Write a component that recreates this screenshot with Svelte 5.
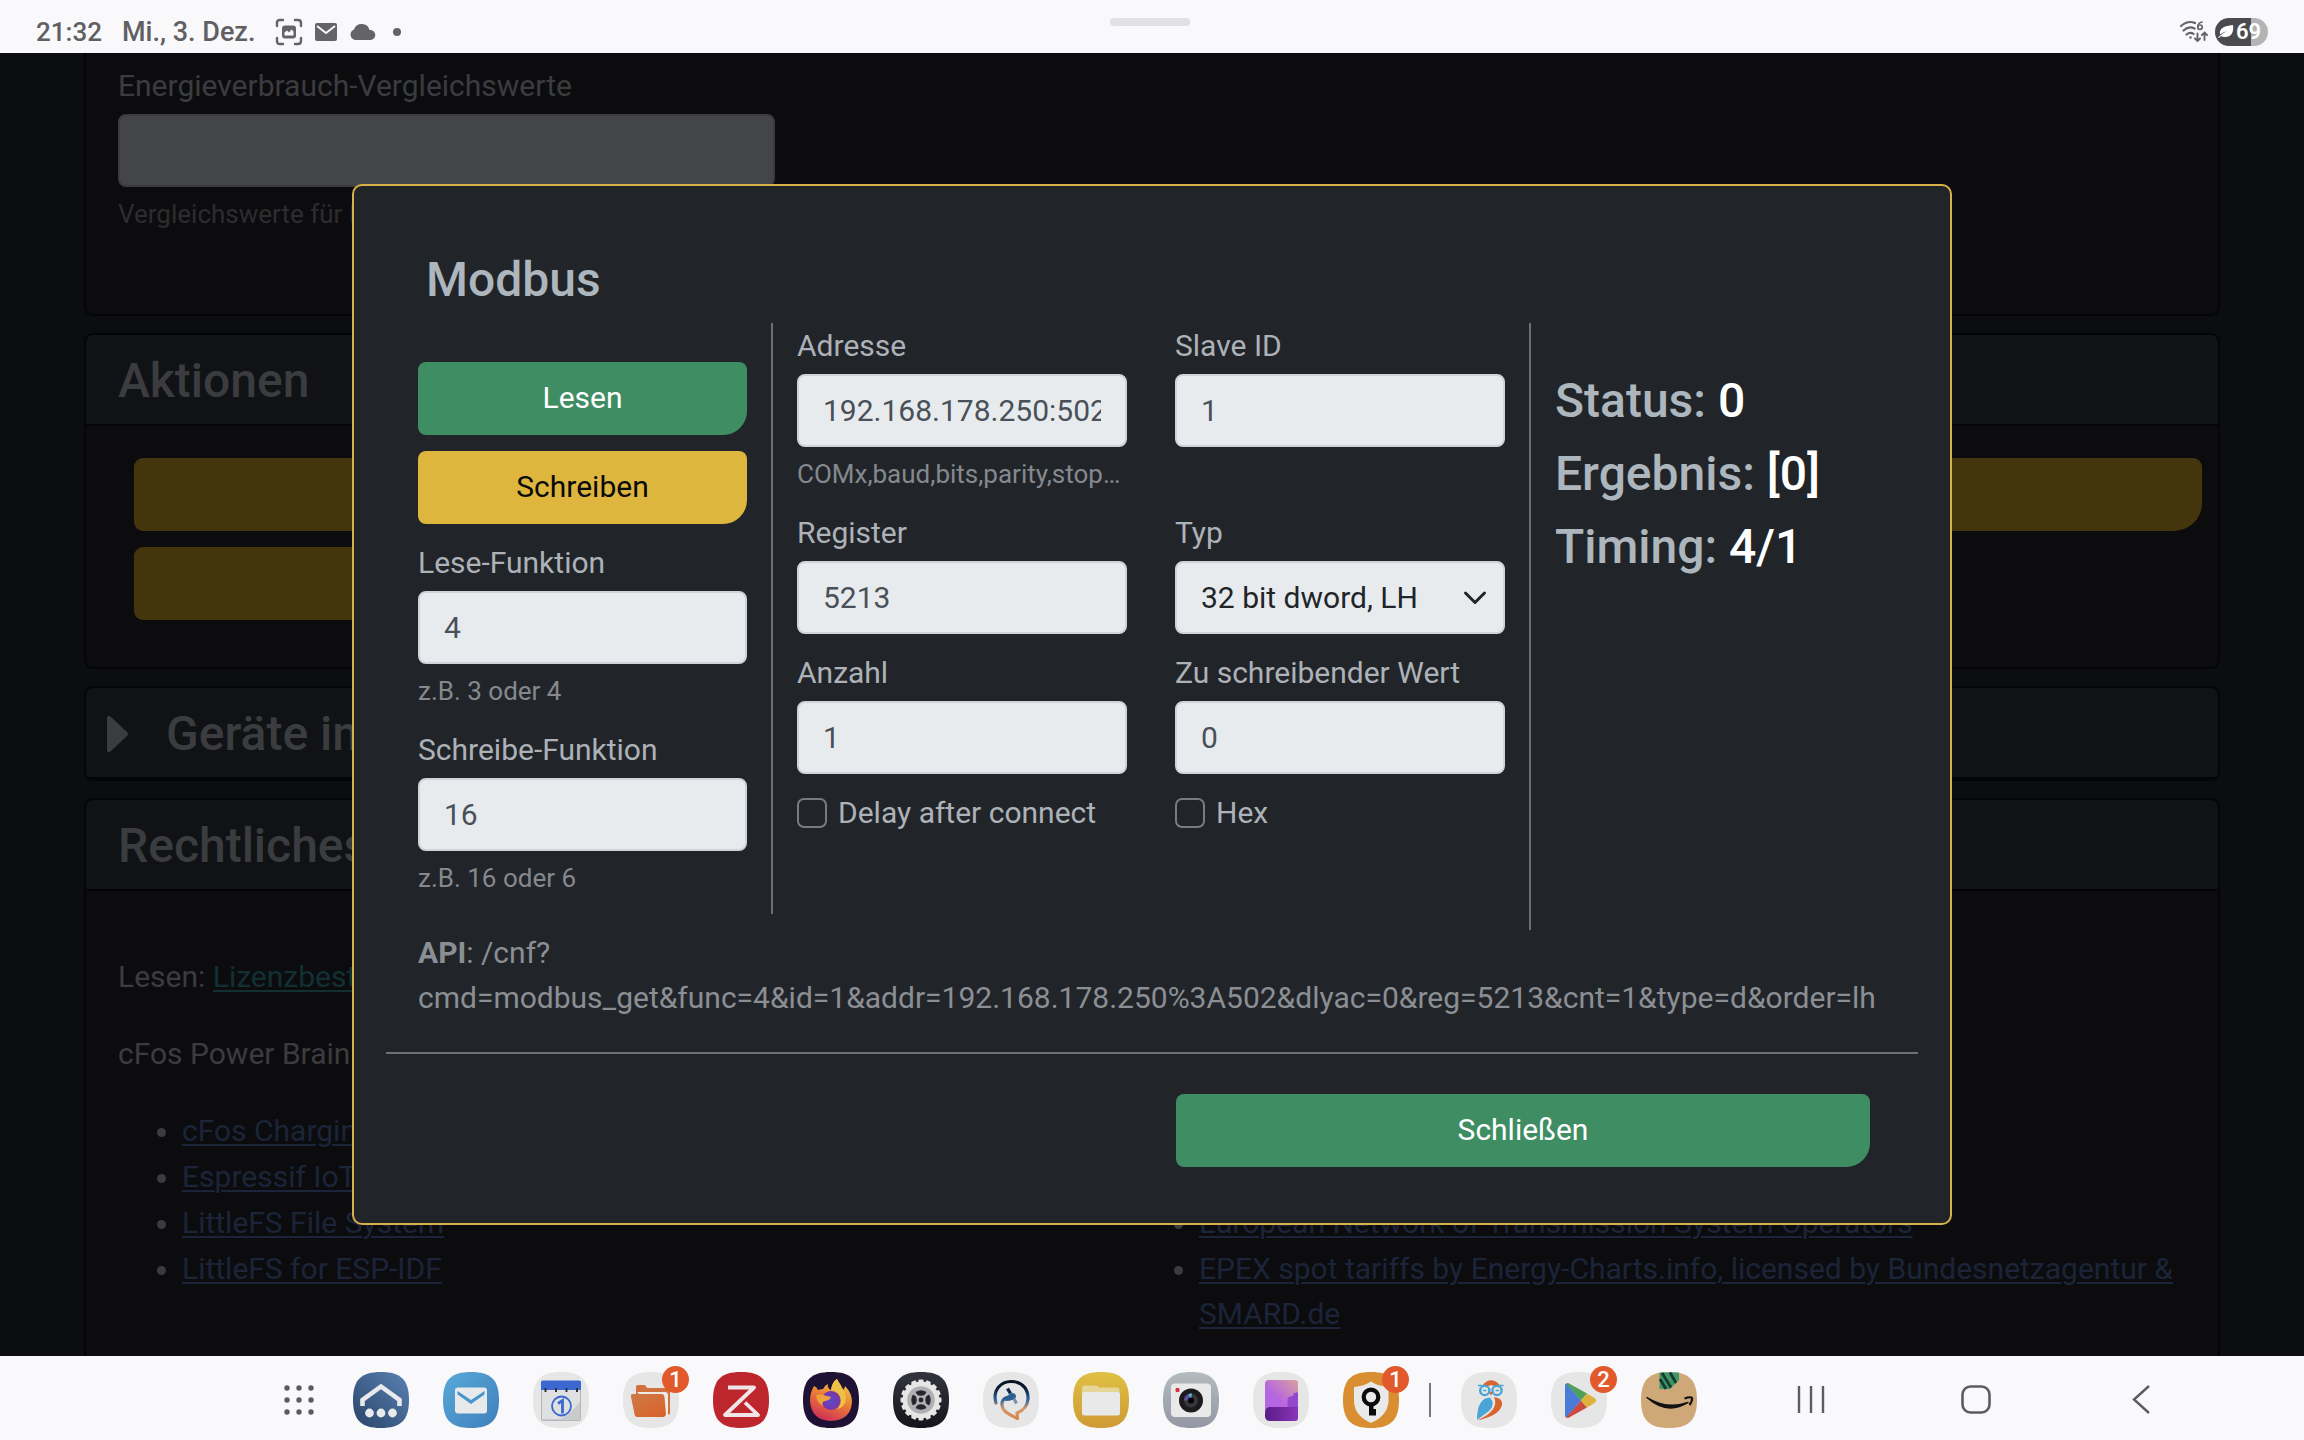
<script>
  let readFn = $state('4');
  let writeFn = $state('16');
  let address = $state('192.168.178.250:502');
  let slaveId = $state('1');
  let register = $state('5213');
  let type = $state('dlh');
  let count = $state('1');
  let value = $state('0');
  let delay = $state(false);
  let hex = $state(false);

  const apiPath = '/cnf?';
  const apiQuery =
    'cmd=modbus_get&func=4&id=1&addr=192.168.178.250%3A502&dlyac=0&reg=5213&cnt=1&type=d&order=lh';
  const squircle = 'M28 0C48 0 56 8 56 28S48 56 28 56 0 48 0 28 8 0 28 0Z';
  const dots = [0, 1, 2].flatMap((r) => [0, 1, 2].map((c) => [c * 12 + 3, r * 12 + 3]));
  const teeth = Array.from({ length: 16 }, (_, i) => i * 22.5);
  const leftLinks = ['cFos Charging Manager', 'Espressif IoT Framework', 'LittleFS File System', 'LittleFS for ESP-IDF'];
  const rightLinks = [
    'European Network of Transmission System Operators',
    'EPEX spot tariffs by Energy-Charts.info, licensed by Bundesnetzagentur & SMARD.de',
  ];
</script>

<div class="screen">
  <header class="status">
    <span class="clock">21:32</span>
    <span class="date">Mi., 3. Dez.</span>
    <div class="notes">
      <svg width="28" height="28" viewBox="0 0 28 28" fill="none" stroke="#646466" stroke-width="2.4">
        <path d="M2 8V5Q2 2 5 2H8M20 2H23Q26 2 26 5V8M26 20V23Q26 26 23 26H20M8 26H5Q2 26 2 23V20" stroke-linecap="round" />
        <rect x="7" y="7.500" width="14" height="13" rx="3" fill="#646466" stroke="none" />
        <path d="M9.500 17.500V14.500L12 12.500 14 14.500 16.500 11.500 18.500 13.500V17.500Z" fill="#f9f9fc" stroke="none" />
      </svg>
      <svg width="24" height="20" viewBox="0 0 24 20">
        <rect x="1" y="1" width="22" height="18" rx="2" fill="#646466" />
        <path d="M3 4L12 11 21 4" fill="none" stroke="#f9f9fc" stroke-width="2" />
      </svg>
      <svg width="28" height="18" viewBox="0 0 28 18">
        <path d="M6 17A5.500 5.500 0 0 1 5 6.500 8 8 0 0 1 13 1 8 8 0 0 1 20.500 7 5 5 0 0 1 22 17Z" fill="#646466" />
      </svg>
      <svg width="8" height="8" viewBox="0 0 8 8"><circle cx="4" cy="4" r="4" fill="#646466" /></svg>
    </div>
    <div class="handle"></div>
    <div class="signals">
      <svg width="28" height="24" viewBox="0 0 28 24" fill="none" stroke="#646466" stroke-width="2.200" stroke-linecap="round">
        <path d="M1 6Q8 0 15 3M3.500 10.500Q9 5.500 14.500 8.500M6.500 14.500Q10 11.500 13.500 13.800" />
        <circle cx="10.500" cy="17.500" r="1.200" fill="#646466" stroke="none" />
        <path d="M22 2Q18 3 17.800 6.500" stroke-width="1.700" />
        <circle cx="20" cy="7.200" r="2.200" stroke-width="1.700" />
        <path d="M17.500 13.500V20.500M15 18.500L17.500 21 20 18.500M24.500 20V12.500M22 15L24.500 12.500 27 15" stroke-width="1.900" />
      </svg>
      <div class="battery">
        <svg width="16" height="14" viewBox="0 0 16 14">
          <path d="M15 0C16 8 13 12 7 12Q4 12 3 11L1 13 0 12.500Q3 9 9 6 4 7.500 2 9.500C1 3 6 1 15 0Z" fill="#fff" />
        </svg>
        <span>69</span>
      </div>
    </div>
  </header>

  <main>
    <div class="page">
      <section class="card cut">
        <label for="compare">Energieverbrauch-Vergleichswerte</label>
        <input id="compare" class="dim" type="text" />
        <small>Vergleichswerte für Energie</small>
      </section>

      <section class="card">
        <h3>Aktionen</h3>
        <div class="actions">
          <button type="button" aria-label="Neu starten"></button>
          <button type="button" aria-label="Aktualisieren"></button>
          <button type="button" aria-label="Modbus"></button>
        </div>
      </section>

      <section class="card closed">
        <h3>
          <svg width="22" height="38" viewBox="0 0 22 38"><path d="M0 3Q0-1 4 2L20 17Q22 19 20 21L4 36Q0 39 0 35Z" fill="#3b3c3f" /></svg>
          Geräte im Netzwerk
        </h3>
      </section>

      <section class="card last">
        <h3>Rechtliches</h3>
        <div class="legal">
          <p>Lesen: <a class="teal" href="#license">Lizenzbestimmungen</a></p>
          <p>cFos Power Brain</p>
          <div class="lists">
            <ul>
              {#each leftLinks as link}<li><a href="#legal">{link}</a></li>{/each}
            </ul>
            <ul class="short">
              {#each rightLinks as link}<li><a href="#legal">{link}</a></li>{/each}
            </ul>
          </div>
        </div>
      </section>
    </div>

    <div class="overlay">
      <div class="modal" role="dialog" aria-modal="true" aria-labelledby="title">
        <h2 id="title">Modbus</h2>
        <div class="cols">
          <div class="col side">
            <button type="button" class="btn green">Lesen</button>
            <button type="button" class="btn yellow">Schreiben</button>
            <div class="field">
              <label for="readfn">Lese-Funktion</label>
              <input id="readfn" type="text" bind:value={readFn} />
              <small>z.B. 3 oder 4</small>
            </div>
            <div class="field">
              <label for="writefn">Schreibe-Funktion</label>
              <input id="writefn" type="text" bind:value={writeFn} />
              <small>z.B. 16 oder 6</small>
            </div>
          </div>

          <div class="col params">
            <div class="field">
              <label for="addr">Adresse</label>
              <input id="addr" type="text" bind:value={address} />
              <small>COMx,baud,bits,parity,stopbits</small>
            </div>
            <div class="field">
              <label for="slave">Slave ID</label>
              <input id="slave" type="text" bind:value={slaveId} />
            </div>
            <div class="field">
              <label for="reg">Register</label>
              <input id="reg" type="text" bind:value={register} />
            </div>
            <div class="field">
              <label for="type">Typ</label>
              <div class="select">
                <select id="type" bind:value={type}>
                  <option value="dlh">32 bit dword, LH</option>
                  <option value="dhl">32 bit dword, HL</option>
                </select>
                <svg width="24" height="16" viewBox="0 0 24 16" fill="none" stroke="#212529" stroke-width="3" stroke-linecap="round" stroke-linejoin="round"><path d="M2.500 3L12 12.500 21.500 3" /></svg>
              </div>
            </div>
            <div class="field">
              <label for="count">Anzahl</label>
              <input id="count" type="text" bind:value={count} />
            </div>
            <div class="field">
              <label for="value">Zu schreibender Wert</label>
              <input id="value" type="text" bind:value={value} />
            </div>
            <label class="check"><input type="checkbox" bind:checked={delay} />Delay after connect</label>
            <label class="check"><input type="checkbox" bind:checked={hex} />Hex</label>
          </div>

          <div class="col result">
            <p>Status: <b>0</b></p>
            <p>Ergebnis: <b>[0]</b></p>
            <p>Timing: <b>4/1</b></p>
          </div>
        </div>

        <p class="api"><strong>API</strong>: {apiPath}<br />{apiQuery}</p>
        <hr />
        <div class="foot">
          <button type="button" class="btn green">Schließen</button>
        </div>
      </div>
    </div>
  </main>

  <nav class="taskbar" aria-label="Apps">
    <button type="button" class="grid" aria-label="Alle Apps">
      <svg width="30" height="30" viewBox="0 0 30 30" fill="#5c5c5f">
        {#each dots as [x, y]}<circle cx={x} cy={y} r="2.700" />{/each}
      </svg>
    </button>
    <div class="apps">
      <button type="button" aria-label="Start">
        <svg viewBox="0 0 56 56">
          <defs><linearGradient id="gHome" x1="1" y1="0" x2="0" y2="1"><stop offset="0" stop-color="#5a82b4" /><stop offset="1" stop-color="#294468" /></linearGradient></defs>
          <path d={squircle} fill="url(#gHome)" />
          <path d="M9.500 34V28L28 14.500 46.500 28V34" fill="none" stroke="#e9eaec" stroke-width="4.600" />
          <g fill="#e9eaec"><circle cx="16.500" cy="41" r="4.400" /><circle cx="28" cy="41" r="4.400" /><circle cx="39.500" cy="41" r="4.400" /></g>
        </svg>
      </button>
      <button type="button" aria-label="E-Mail">
        <svg viewBox="0 0 56 56">
          <defs><linearGradient id="gMail" x1="0" y1="0" x2="1" y2="1"><stop offset="0" stop-color="#58a9d8" /><stop offset="1" stop-color="#3f7fbd" /></linearGradient></defs>
          <path d={squircle} fill="url(#gMail)" />
          <rect x="12" y="15.500" width="32" height="26" rx="3" fill="#e8e9eb" />
          <path d="M14.500 19L28 28 41.500 19V22.500L28 32 14.500 22.500Z" fill="#4796cc" />
        </svg>
      </button>
      <button type="button" aria-label="Kalender">
        <svg viewBox="0 0 56 56">
          <path d={squircle} fill="#e6e6e6" />
          <rect x="8" y="9" width="40" height="40" rx="2" fill="#b5b6b9" />
          <rect x="9" y="9" width="38" height="38.500" rx="1.500" fill="#dfe0e2" />
          <path d="M8 18V10Q8 8.500 10 8.500H46Q48 8.500 48 10V18Z" fill="#3a68d0" />
          <path d="M27 47.500L37 41 47 30V47.500Z" fill="#c9cacc" />
          <g stroke="#333" stroke-width="2"><path d="M12.500 16V20M23 16V20M33.500 16V20M44 16V20" /></g>
          <circle cx="28.500" cy="34" r="9.500" fill="none" stroke="#3a68d0" stroke-width="1.800" />
          <path d="M25 31.500L29.500 28.500V41.500" fill="none" stroke="#3a68d0" stroke-width="2.800" />
        </svg>
      </button>
      <button type="button" aria-label="Dateien">
        <svg viewBox="0 0 56 56">
          <defs><linearGradient id="gFold" x1="0" y1="0" x2="1" y2="1"><stop offset="0" stop-color="#cf7a48" /><stop offset="1" stop-color="#d96128" /></linearGradient></defs>
          <path d={squircle} fill="#e6e6e6" />
          <path d="M13 22V15Q13 13 15 13H21Q23 13 24 16H44Q47 16 47 19V42L40 44Z" fill="#d0713e" />
          <path d="M14 20H42Q45 20 45 23V44H38Z" fill="#eeeae7" />
          <path d="M10 22H38Q41 22 41.500 25L43 43 41 45H14Q12 45 11.500 42L8 25Q7.500 22 10 22Z" fill="url(#gFold)" />
        </svg>
        <span class="badge">1</span>
      </button>
      <button type="button" aria-label="Z">
        <svg viewBox="0 0 56 56">
          <path d={squircle} fill="#bd262d" />
          <path d="M15 15.500H41L12 43H45L32 30.500" fill="none" stroke="#f0e6e7" stroke-width="3.800" stroke-linejoin="round" />
        </svg>
      </button>
      <button type="button" aria-label="Firefox">
        <svg viewBox="0 0 56 56">
          <defs>
            <linearGradient id="gFox" x1="0.800" y1="0" x2="0.350" y2="1"><stop offset="0" stop-color="#f0d24a" /><stop offset="0.500" stop-color="#ea7d35" /><stop offset="1" stop-color="#cf2f58" /></linearGradient>
            <radialGradient id="gGlobe"><stop offset="0" stop-color="#5b49c8" /><stop offset="1" stop-color="#7a36a8" /></radialGradient>
          </defs>
          <path d={squircle} fill="#1d1233" />
          <path d="M11 14Q14 15 15 18Q18 17 20 17Q22 13 25 12Q24 16 28 18Q29 10 34 7Q35 14 40 18Q42 16 42 14Q49 21 49 30Q48 48 28 49Q8 48 7 29Q7 20 11 14Z" fill="url(#gFox)" />
          <circle cx="28" cy="28.500" r="9.500" fill="url(#gGlobe)" />
          <path d="M13 23Q18 22 22 23.500L28 25Q27 28.500 22 29Q18 30 20 34Q14 31 13 23Z" fill="#f0a13c" />
          <path d="M28 18Q37 19 38 28Q38 34 34 37Q43 35 43 26Q42 19 34 7Q29 10 28 18Z" fill="#eec245" />
        </svg>
      </button>
      <button type="button" aria-label="Einstellungen">
        <svg viewBox="0 0 56 56">
          <defs><linearGradient id="gSet" x1="0" y1="0" x2="0" y2="1"><stop offset="0" stop-color="#34343f" /><stop offset="1" stop-color="#14141a" /></linearGradient></defs>
          <path d={squircle} fill="url(#gSet)" />
          {#each teeth as a}<rect x="25.500" y="7.500" width="5" height="8" rx="1" fill="#e6e6e6" transform="rotate({a} 28 28)" />{/each}
          <circle cx="28" cy="28" r="18.500" fill="#e6e6e6" />
          <circle cx="28" cy="28" r="13.800" fill="#b0b0b4" />
          <g fill="#25252c">
            <path id="slot" d="M22.500 20Q28 16.500 33.500 20L31.500 23Q28 24.500 24.500 23Z" />
            <path d="M22.500 20Q28 16.500 33.500 20L31.500 23Q28 24.500 24.500 23Z" transform="rotate(90 28 28)" />
            <path d="M22.500 20Q28 16.500 33.500 20L31.500 23Q28 24.500 24.500 23Z" transform="rotate(180 28 28)" />
            <path d="M22.500 20Q28 16.500 33.500 20L31.500 23Q28 24.500 24.500 23Z" transform="rotate(270 28 28)" />
            <circle cx="28" cy="28" r="2.400" />
          </g>
        </svg>
      </button>
      <button type="button" aria-label="Assistent">
        <svg viewBox="0 0 56 56">
          <defs><linearGradient id="gHorse" x1="0" y1="8" x2="0" y2="49" gradientUnits="userSpaceOnUse"><stop offset="0" stop-color="#08111f" /><stop offset="0.200" stop-color="#0c1c30" /><stop offset="0.480" stop-color="#2f649c" /><stop offset="0.700" stop-color="#d39a6c" /><stop offset="1" stop-color="#db7f45" /></linearGradient></defs>
          <path d={squircle} fill="#e6e6e6" />
          <path d="M13 31C9 17 19 9.500 28 9.500C40 9.500 45.500 18 45 27C44.500 35 39 39 34 41L34.500 46.500C29 43.500 24 42 21 38C17.500 33 18.500 27 24 25.500" fill="none" stroke="url(#gHorse)" stroke-width="3.200" stroke-linecap="round" stroke-linejoin="round" />
          <path d="M22 29Q24 22 29 21Q33 21 33 25Q31 29 22 29Z" fill="#2c5f92" />
          <path d="M24.500 16.500L27.500 21.500" stroke="#12294a" stroke-width="3.400" />
          <path d="M31 26.500L33.500 31.500" stroke="#7b8fa6" stroke-width="3" />
        </svg>
      </button>
      <button type="button" aria-label="Eigene Dateien">
        <svg viewBox="0 0 56 56">
          <defs><linearGradient id="gMy" x1="0" y1="0" x2="0" y2="1"><stop offset="0" stop-color="#dfc044" /><stop offset="1" stop-color="#cf9a34" /></linearGradient></defs>
          <path d={squircle} fill="url(#gMy)" />
          <path d="M9 24V16Q9 13.500 11.500 13.500H23Q25 13.500 26 15.500H44Q46.500 15.500 46.500 18V24Z" fill="#e5d596" />
          <rect x="9" y="20" width="38" height="23.500" rx="2.500" fill="#e9e9ea" />
        </svg>
      </button>
      <button type="button" aria-label="Kamera">
        <svg viewBox="0 0 56 56">
          <defs><linearGradient id="gCam" x1="0" y1="0" x2="0" y2="1"><stop offset="0" stop-color="#b3bcc0" /><stop offset="1" stop-color="#9497a4" /></linearGradient></defs>
          <path d={squircle} fill="url(#gCam)" />
          <rect x="8" y="11.500" width="40" height="33.500" rx="4" fill="#e9e9ea" />
          <circle cx="14.500" cy="18" r="2.200" fill="#d0343a" />
          <circle cx="28" cy="28.500" r="12" fill="#1b1b1d" />
          <circle cx="28" cy="28.500" r="7" fill="#37373b" />
          <path d="M28 28.500L21 28.500A7 7 0 0 1 28 21.500Z" fill="#5d4f9c" />
          <path d="M28 28.500L25.500 22A7 7 0 0 1 29 21.500Z" fill="#54b8c6" />
          <circle cx="28" cy="28.500" r="3" fill="#000" />
        </svg>
      </button>
      <button type="button" aria-label="Journal">
        <svg viewBox="0 0 56 56">
          <defs>
            <linearGradient id="gJ" x1="0" y1="1" x2="1" y2="0"><stop offset="0.400" stop-color="#b566e0" /><stop offset="1" stop-color="#dca0a0" /></linearGradient>
            <linearGradient id="gK" x1="0" y1="0" x2="1" y2="0"><stop offset="0" stop-color="#5a1c86" /><stop offset="1" stop-color="#8a35b8" /></linearGradient>
          </defs>
          <path d={squircle} fill="#e6e6e6" />
          <path d="M12 40V12Q12 8 16 8H42Q45 8 45 11V40Z" fill="url(#gJ)" />
          <path d="M34.500 36V28Q34.500 24.500 38 24.500Q41 24 41 20Q41 22 45 20V38Z" fill="#9448cc" />
          <path d="M12 42Q12 34 18 35H45V46Q45 49 42 49H17Q12 49 12 44Z" fill="url(#gK)" />
        </svg>
      </button>
      <button type="button" aria-label="Schlüssel">
        <svg viewBox="0 0 56 56">
          <path d={squircle} fill="#d98e31" />
          <path d="M28 9.500Q35 14 45.500 15V30Q44 44 28 51Q12 44 11 30V15Q21 14 28 9.500Z" fill="#e9e9ea" />
          <circle cx="28" cy="25" r="7.300" fill="none" stroke="#0b0b0b" stroke-width="4.200" />
          <path d="M26 31H30.500V37H33V43.500H26Z" fill="#0b0b0b" />
        </svg>
        <span class="badge">1</span>
      </button>
    </div>
    <span class="sep"></span>
    <div class="apps">
      <button type="button" aria-label="Eule">
        <svg viewBox="0 0 56 56">
          <path d={squircle} fill="#e6e6e6" />
          <path d="M22 12.500Q30 4 38.500 12.500Q34 15 30 13 26 15 22 12.500Z" fill="#d9652e" />
          <g fill="none" stroke="#4aa5d6" stroke-width="2.400"><circle cx="23.800" cy="18.500" r="4.600" /><circle cx="36" cy="18.500" r="4.600" /><path d="M17 13.500H22M38 13.500H42.500" stroke-width="1.600" /><path d="M22 18.500H25.500M34.500 18.500H38" stroke-width="1.600" /></g>
          <path d="M28.500 20H31.500L30 24Z" fill="#d9652e" />
          <path d="M29 25.500Q35 32 28 39L16 48Q16 26 29 25.500Z" fill="#4aa5d6" />
          <path d="M33 25Q42 26 41 33Q38 44 17 48Q39 38 33 25Z" fill="#d9652e" />
        </svg>
      </button>
      <button type="button" aria-label="Play Store">
        <svg viewBox="0 0 56 56">
          <path d={squircle} fill="#e6e6e6" />
          <path d="M14 13V44Q14 46 16 45L30 28.500 16 12Q14 11 14 13Z" fill="#4a7bd6" />
          <path d="M15 11.500Q17 10.500 19 12L36 21.500 30 28.500Z" fill="#4fa05a" />
          <path d="M15 45.500Q17 46.500 19 45L36 35.500 30 28.500Z" fill="#cc4a40" />
          <path d="M36 21.500L43.500 26Q47 28.500 43.500 31L36 35.500 30 28.500Z" fill="#deb23e" />
        </svg>
        <span class="badge">2</span>
      </button>
      <button type="button" aria-label="Amazon">
        <svg viewBox="0 0 56 56">
          <path d={squircle} fill="#cfa878" />
          <path d="M18.500 0.500H38V8L29 17H18.500Z" fill="#3f9668" />
          <path d="M19 7L25 17M21 1L30 15.500M29 0.500L35 11" stroke="#163a30" stroke-width="2.800" />
          <path d="M6 25.500Q26 38 47 30.500Q26 43.500 6 25.500Z" fill="#111" stroke="#111" stroke-width="1.400" stroke-linejoin="round" />
          <path d="M43.500 26.500Q50 24.500 51 26 51.500 29 48.500 33" fill="none" stroke="#111" stroke-width="2.200" />
        </svg>
      </button>
    </div>
    <div class="nav">
      <button type="button" aria-label="Letzte Apps"><svg width="28" height="30" viewBox="0 0 28 30" stroke="#5c5c5f" stroke-width="2.400"><path d="M2 1V28M14 1V28M26 1V28" /></svg></button>
      <button type="button" aria-label="Startseite"><svg width="30" height="30" viewBox="0 0 30 30" fill="none" stroke="#5c5c5f" stroke-width="2.600"><rect x="1.500" y="1.500" width="27" height="26" rx="8" /></svg></button>
      <button type="button" aria-label="Zurück"><svg width="20" height="30" viewBox="0 0 20 30" fill="none" stroke="#5c5c5f" stroke-width="2.400"><path d="M18 1L3 14.500 18 28" /></svg></button>
    </div>
  </nav>
</div>

<style>
  :global(body) { margin: 0; background: #0b0c0e; }
  .screen, .screen :global(*) { box-sizing: border-box; }
  .screen {
    display: flex; flex-direction: column; height: 100vh; overflow: hidden;
    font: 400 30px/45px Roboto, sans-serif; color: #adb2b8;
  }
  button, input, select { font: inherit; margin: 0; }
  h2, h3, p, ul { margin: 0; }
  svg { display: block; flex: none; }

  .status {
    position: relative; display: flex; align-items: center; flex: none; height: 53px;
    padding: 11px 36px 0; background: #f9f9fc; color: #606062;
    font-size: 26px; line-height: 30px; font-weight: 500;
  }
  .date { margin-left: 20px; font-size: 27px; }
  .notes { display: flex; align-items: center; gap: 11px; margin-left: 20px; }
  .notes svg:last-child { margin-left: 5px; }
  .handle {
    position: absolute; left: 50%; top: 18px; width: 80px; height: 8px; margin-left: -42px;
    border-radius: 4px; background: #e1e1e4;
  }
  .signals { display: flex; align-items: center; gap: 7px; margin-left: auto; }
  .battery {
    display: flex; align-items: center; gap: 2px; width: 53px; height: 28px; padding-left: 3px;
    border-radius: 14px; background: linear-gradient(90deg, #4b4b4d 68%, #b4b4b6 68%);
    color: #fff; font-size: 22px; font-weight: 600; line-height: 28px;
  }

  main { position: relative; flex: 1; min-height: 0; overflow: hidden; background: #0b0d0f; }
  .page { display: flex; flex-direction: column; gap: 17px; padding: 0 84px; color: #3b3c3f; }
  .card { border: 2px solid #040506; border-radius: 9px; background: #0c0c0e; overflow: hidden; }
  .cut { display: flex; flex-direction: column; align-items: flex-start; padding: 10px 32px 80px; border-top: 0; border-radius: 0 0 9px 9px; }
  .cut label { margin-bottom: 6px; }
  .cut small { margin-top: 8px; color: #2c2d2f; }
  .dim { width: calc(33.333% - 32px); height: 73px; border: 2px solid #3b3c3e; border-radius: 8px; background: #444547; padding: 0 24px; }
  small { display: block; font-size: 26px; line-height: 39px; }
  .card h3 {
    display: flex; align-items: center; padding: 18px 32px 16px; border-bottom: 2px solid #040506;
    background: #111215; font-size: 48px; line-height: 55px; font-weight: 500; white-space: nowrap;
  }
  .actions { display: grid; grid-template-columns: 1fr 1fr; gap: 16px 48px; padding: 32px 16px 47px 48px; }
  .actions button { height: 73px; border: 0; border-radius: 9px 9px 28px 9px; background: #43360c; }
  .closed h3 { gap: 37px; padding-left: 21px; }
  .legal { padding: 63px 32px; }
  .legal p { margin-bottom: 32px; }
  .lists { display: grid; grid-template-columns: 1fr 1fr; }
  ul { padding-left: 64px; }
  ul.short { padding-top: 92px; padding-left: 47px; }
  li { margin-bottom: 1px; }
  a { color: #1b2438; text-underline-offset: 3px; text-decoration-thickness: 2px; }
  a.teal { color: #123034; }

  .overlay { position: absolute; inset: 0; display: flex; align-items: center; justify-content: center; }
  .modal { width: 1600px; max-width: 94%; padding: 66px 32px 56px; border: 2px solid #d8b14b; border-radius: 10px; background: #212529; }
  h2 { padding-left: 40px; font-size: 48px; line-height: 55px; font-weight: 500; color: #adb5bd; }
  .cols { display: grid; grid-template-columns: 1fr 2fr 1fr; align-items: start; margin: 16px 8px 0; }
  .col { padding: 0 24px; }
  .side, .params { border-right: 2px solid #6b7076; }
  .side { display: flex; flex-direction: column; gap: 16px; padding-top: 39px; padding-bottom: 16px; }
  .params { display: grid; grid-template-columns: 1fr 1fr; gap: 16px 48px; padding-bottom: 95px; }
  .field { min-width: 0; }
  .field label { display: block; margin-bottom: 6px; }
  .field small { margin-top: 8px; overflow: hidden; white-space: nowrap; text-overflow: ellipsis; color: #85898e; }
  .field input, select {
    display: block; width: 100%; height: 73px; padding: 0 24px; border: 2px solid #ced4da; border-radius: 8px;
    background: #e8ebee; color: #495057;
  }
  .select { position: relative; }
  select { appearance: none; color: #212529; }
  .select svg { position: absolute; right: 18px; top: 29px; pointer-events: none; }
  .check { display: flex; align-items: center; gap: 11px; }
  .check input { appearance: none; width: 30px; height: 30px; border: 2px solid #777c82; border-radius: 7px; }
  .check input:checked { background: #3f8e63; }
  .btn { height: 73px; padding: 0 0 2px; border: 0; border-radius: 8px 8px 24px 8px; }
  .green { background: #3f8e63; color: #fff; }
  .yellow { background: #deb63e; color: #0a0a0a; }
  .result { padding-top: 50px; font-size: 48px; font-weight: 500; line-height: 55px; color: #adb5bd; }
  .result p { margin-bottom: 18px; }
  .result b { font-weight: 500; color: #fff; }
  .api { margin: 0 32px; color: #8b8f94; white-space: nowrap; }
  .api strong { font-weight: 700; }
  hr { height: 2px; margin: 32px 0 40px; border: 0; background: #6c7178; }
  .foot { display: flex; justify-content: flex-end; padding: 0 48px 0 0; }
  .foot .btn { width: 694px; max-width: 100%; }

  .taskbar { display: flex; align-items: center; gap: 30px; flex: none; height: 84px; padding: 3px 131px 0 279px; background: #f9f9fc; }
  .taskbar button { position: relative; padding: 0; border: 0; background: none; }
  .grid { display: grid; place-items: center; width: 40px; height: 56px; margin-right: 4px; }
  .apps { display: flex; gap: 34px; }
  .apps button { width: 56px; height: 56px; }
  .badge {
    position: absolute; right: -10px; top: -6px; width: 27px; height: 27px; border-radius: 50%;
    background: #e2592b; color: #fff; font-size: 22px; line-height: 27px; font-weight: 500; text-align: center;
  }
  .sep { width: 2px; height: 34px; background: #77777a; }
  .nav { display: flex; gap: 101px; margin-left: auto; }
  .nav button { display: grid; place-items: center; width: 64px; height: 56px; }
</style>
